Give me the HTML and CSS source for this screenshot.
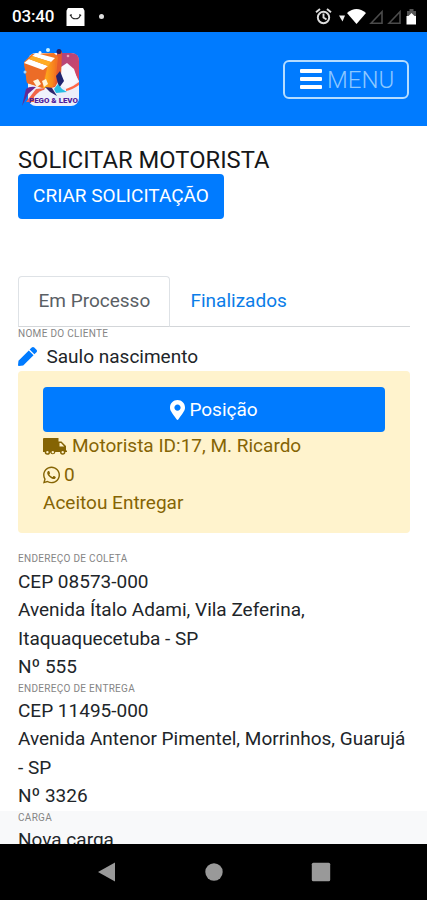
FILE: index.html
```html
<!DOCTYPE html>
<html lang="pt-BR">
<head>
<meta charset="utf-8">
<meta name="viewport" content="width=device-width, initial-scale=1">
<title>Solicitar motorista</title>
<link rel="stylesheet" href="styles.css">
</head>
<body>
<div class="screen">
  <div class="status">
    <span class="clock">03:40</span>
    <svg class="bag" viewBox="0 0 19 19"><path d="M1.5 0h16L19 3v16H0V3z" fill="#fff"/><path d="M4.500 7.500c1 5.200 9 5.200 10 0M3.500 8l2-1M13.500 7l2 1" fill="none" stroke="#222" stroke-width="1.200"/></svg>
    <span class="dot"></span>
    <svg class="tray" width="102" height="20" viewBox="0 0 102 20">
      <g fill="none" stroke="#ddd" stroke-width="1.900"><circle cx="8.500" cy="10.500" r="5.700"/><path d="M8.500 6.500v4l3 2M1 5.200l4-3.300M12 1.900l4 3.300"/></g>
      <path d="M24 8.500h6l-2.500 6z" fill="#eee"/>
      <path d="M32 6q9.500-8 19 0l-9.500 11z" fill="#fff"/>
      <g fill="none" stroke="#4b4b4b" stroke-width="1.600"><path d="M56 16.300L67 4.800v11.500zM74 16.300L85 4.800v11.500z"/></g>
      <path d="M92 4h2.500V2h4v2h2.500v5h-9z" fill="#555"/><path d="M91.500 9h2l3-3 3 3h1.500v8.500h-9.500z" fill="#fff"/>
    </svg>
  </div>
  <header class="navbar">
    <svg class="logo" viewBox="0 0 60 62">
      <defs>
        <linearGradient id="sky" x1="0" y1="0" x2="1" y2="1"><stop offset="0" stop-color="#a74483"/><stop offset="1" stop-color="#d94862"/></linearGradient>
        <linearGradient id="box" x1="0" y1="0" x2="1" y2="0"><stop offset="0" stop-color="#ffb51a"/><stop offset="1" stop-color="#f5761f"/></linearGradient>
      </defs>
      <rect x="6" y="6" width="51" height="53" rx="8" fill="#eceefa"/>
      <path d="M35 6h14q8 0 8 8v20l-7-13-11 3-5 10z" fill="url(#sky)"/>
      <path d="M39 20l6-4 7 6 4 12-10 8-8-4z" fill="#f8f8fd"/>
      <path d="M32 10l8-6-1 26-6 10-8 2z" fill="#e65a2c"/>
      <path d="M2 15L10 7l22-1 4 4-3 29-13 2L5 36z" fill="#f27423"/>
      <path d="M26 17l8-5-3 28-10 1z" fill="url(#box)"/>
      <path d="M2 16l22 5-4 19L5 36z" fill="#ec6c27"/>
      <path d="M2 16l5-4 19 7-5 4zM10 9l4-3 19 5-4 4z" fill="#fff"/>
      <path d="M7 12l3-3 19 6-3 4z" fill="#ffad24"/>
      <path d="M11 34l5-2 3 5-4 3zM20 34l4-2 2 5-4 3z" fill="#fff5db"/>
      <path d="M0 59L4 42q3-3 10-2L6 47z" fill="#662a91"/>
      <path d="M4 55l10-13 9-1-6 14z" fill="#f36548"/>
      <path d="M12 50q7-9 14-7l8 6-2 6H12z" fill="#f0f2fc"/>
      <path d="M34 29l4-5 4 10-5 7z" fill="#20236f"/><path d="M23 40l7 1 5 8-7-4z" fill="#30256c"/>
      <path d="M36 37l4 5 5 3-11 1-2-4z" fill="#27bce3"/>
      <path d="M44 42q7-2 13-7v3q-7 5-13 6z" fill="#ff6847"/>
      <circle cx="37" cy="4.500" r="2.500" fill="#281d60"/><circle cx="26" cy="3" r="2" fill="#cdf2ff"/><circle cx="18" cy="5.500" r="1.500" fill="#fff"/><circle cx="3" cy="25" r="1.500" fill="#a4d8ff"/><circle cx="46" cy="9" r="1.300" fill="#e9a3b8"/>
      <text class="logo-text" x="7" y="55.500" textLength="49" lengthAdjust="spacingAndGlyphs">PEGO &amp; LEVO</text>
    </svg>
    <button class="toggler"><span class="bars"><i></i><i></i><i></i></span><span>MENU</span></button>
  </header>
  <main class="content">
    <h1 class="title">SOLICITAR MOTORISTA</h1>
    <button class="btn create">CRIAR SOLICITAÇÃO</button>
    <nav class="tabs"><a class="tab active">Em Processo</a><a class="tab">Finalizados</a></nav>
    <div class="label">NOME DO CLIENTE</div>
    <div class="client"><svg class="pencil" viewBox="0 0 512 512"><path fill="#007bff" d="M290.740 93.240l128.020 128.020-277.990 277.990-114.140 12.600C11.350 513.540-1.560 500.620.140 485.340l12.700-114.220 277.900-277.880zm207.200-19.060l-60.110-60.110c-18.750-18.750-49.160-18.750-67.910 0l-56.550 56.550 128.020 128.020 56.550-56.550c18.750-18.760 18.750-49.160 0-67.910z"/></svg><span>Saulo nascimento</span></div>
    <section class="alert">
      <button class="btn position"><svg class="pin" viewBox="0 0 384 512"><path fill="#fff" d="M172.268 501.670C26.970 291.031 0 269.413 0 192 0 85.961 85.961 0 192 0s192 85.961 192 192c0 77.413-26.970 99.031-172.268 309.670-9.535 13.774-29.930 13.773-39.464 0zM192 272c44.183 0 80-35.817 80-80s-35.817-80-80-80-80 35.817-80 80 35.817 80 80 80z"/></svg><span>Posição</span></button>
      <div class="line driver"><svg class="truck" viewBox="0 0 24 17"><path fill="#856404" fill-rule="evenodd" d="M1 0h14.500v3.500h3l4.500 4.500v4.500h1v1.500h-1.600a2.700 2.700 0 0 1-5.400 0h-4.600a2.700 2.700 0 0 1-5.300.2a2.700 2.700 0 0 1-5.400-.2H0V1q0-1 1-1zM16.500 5v3.500h4.700L18 5zM4.400 12.900a1.200 1.200 0 1 0 .01 0zM9.800 12.900a1.200 1.200 0 1 0 .01 0zM19.700 12.900a1.200 1.200 0 1 0 .01 0z"/></svg><span>Motorista ID:17, M. Ricardo</span></div>
      <div class="line phone"><svg class="whats" viewBox="0 0 448 512"><path fill="#856404" d="M380.900 97.100C339 55.100 283.200 32 223.900 32c-122.400 0-222 99.600-222 222 0 39.100 10.200 77.300 29.600 111L0 480l117.700-30.900c32.400 17.700 68.900 27 106.100 27h.1c122.300 0 224.100-99.600 224.100-222 0-59.300-25.200-115-67.100-157zm-157 341.600c-33.200 0-65.700-8.900-94-25.700l-6.700-4-69.800 18.300L72 359.200l-4.400-7c-18.500-29.400-28.200-63.300-28.200-98.200 0-101.700 82.800-184.500 184.600-184.500 49.300 0 95.600 19.200 130.400 54.100 34.800 34.900 56.200 81.200 56.100 130.500 0 101.800-84.900 184.600-186.600 184.600zm101.200-138.200c-5.500-2.800-32.800-16.200-37.900-18-5.100-1.900-8.800-2.800-12.500 2.800-3.700 5.600-14.300 18-17.600 21.800-3.200 3.700-6.500 4.200-12 1.400-32.600-16.300-54-29.100-75.500-66-5.700-9.800 5.700-9.100 16.300-30.300 1.800-3.700.9-6.900-.5-9.700-1.400-2.800-12.500-30.100-17.100-41.200-4.500-10.800-9.100-9.300-12.500-9.500-3.200-.2-6.900-.2-10.600-.2-3.700 0-9.700 1.400-14.800 6.900-5.100 5.600-19.400 19-19.400 46.300 0 27.300 19.900 53.700 22.600 57.400 2.800 3.700 39.100 59.700 94.800 83.800 35.200 15.200 49 16.500 66.600 13.900 10.700-1.600 32.800-13.400 37.400-26.400 4.600-13 4.600-24.100 3.200-26.400-1.300-2.500-5-3.900-10.500-6.600z"/></svg><span>0</span></div>
      <div class="line">Aceitou Entregar</div>
    </section>
    <section class="address">
      <div class="label">ENDEREÇO DE COLETA</div>
      <div>CEP 08573-000</div><div>Avenida Ítalo Adami, Vila Zeferina,<br>Itaquaquecetuba - SP</div><div>Nº 555</div>
    </section>
    <section class="address">
      <div class="label">ENDEREÇO DE ENTREGA</div>
      <div>CEP 11495-000</div><div>Avenida Antenor Pimentel, Morrinhos, Guarujá<br>- SP</div><div>Nº 3326</div>
    </section>
    <section class="cargo"><div class="label">CARGA</div><div>Nova carga</div></section>
  </main>
  <footer class="softkeys">
    <svg viewBox="0 0 20 20"><path d="M1 10L18 .5v19z"/></svg>
    <svg viewBox="0 0 20 20"><circle cx="10" cy="10" r="8.700"/></svg>
    <svg viewBox="0 0 20 20"><rect x=".8" y=".8" width="18.400" height="18.400" rx="1.500"/></svg>
  </footer>
</div>
</body>
</html>
```
FILE: styles.css
```css
* { box-sizing: border-box; }
body { margin: 0; background: #fff; color: #212529; font: 400 19px/28.44px Roboto, sans-serif; overflow: hidden; }
button { font: inherit; margin: 0; }
svg { display: block; flex: none; }
.screen { width: 427px; height: 900px; display: flex; flex-direction: column; overflow: hidden; }
.status { height: 32px; flex: none; background: #000; color: #fff; display: flex; align-items: center; padding: 1px 10px 0 12px; }
.clock { width: 54px; font-size: 17px; font-weight: 500; letter-spacing: -.2px; }
.bag { width: 19px; height: 18px; }
.dot { width: 5px; height: 5px; border-radius: 50%; background: #ddd; margin-left: 14px; }
.tray { margin-left: auto; }
.navbar { height: 94px; flex: none; background: #007bff; display: flex; align-items: center; justify-content: space-between; padding: 0 18px 0 22px; }
.logo { width: 60px; height: 62px; margin-top: -2px; }
.logo-text { font: 900 6.500px Roboto, sans-serif; fill: #52209a; }
.toggler { width: 126px; height: 39px; margin-top: 1px; border: 2px solid #b5dcff; border-radius: 6px; background: transparent; color: #8dc8ff; display: flex; align-items: center; padding: 1px 0 0 15px; gap: 5px; font-size: 24px; font-weight: 300; }
.bars { width: 22px; display: grid; gap: 4px; margin-top: -2px; }
.bars i { height: 4px; background: #fff; border-radius: 1px; }
.content { flex: 1; min-height: 0; overflow: hidden; padding: 20px 17px 0 18px; }
.title { margin: 0; font-size: 23.750px; line-height: 28px; font-weight: 400; color: #151719; white-space: nowrap; }
.btn { display: flex; align-items: center; justify-content: center; border: 0; border-radius: 4px; background: #007bff; color: #fff; height: 45px; padding: 0; }
.create { width: 206px; }
.tabs { display: flex; height: 51px; margin-top: 57px; border-bottom: 1px solid #d3d6d9; }
.tab { height: 51px; padding: 10px 19.500px 0; color: #0b7de8; border: 1px solid transparent; white-space: nowrap; }
.active { width: 152px; color: #5a6065; background: #fff; border-color: #dee2e6 #dee2e6 #d3d6d9; border-radius: 4px 4px 0 0; }
.label { height: 15.400px; font-size: 10px; line-height: 14px; color: #858585; letter-spacing: .3px; white-space: nowrap; }
.client { height: 29px; display: flex; align-items: center; gap: 9.500px; }
.pencil { width: 19px; height: 19px; }
.alert { height: 162px; background: #fff3cd; border-radius: 4px; padding: 16px 25px 0; color: #856404; }
.position { width: 342px; gap: 4px; }
.pin { width: 15px; height: 20px; }
.line { height: 28.440px; display: flex; align-items: center; }
.driver { gap: 5px; }
.truck { width: 24px; height: 17px; }
.phone { gap: 4px; }
.whats { width: 17px; height: 20px; }
.alert + .address { margin-top: 19px; }
.cargo { margin: 0 -17px 0 -18px; padding: 0 18px; background: #f8f9fa; }
.softkeys { height: 56px; flex: none; background: #000; display: flex; align-items: center; justify-content: center; gap: 87px; }
.softkeys svg { width: 20px; height: 20px; fill: #999; }
```
